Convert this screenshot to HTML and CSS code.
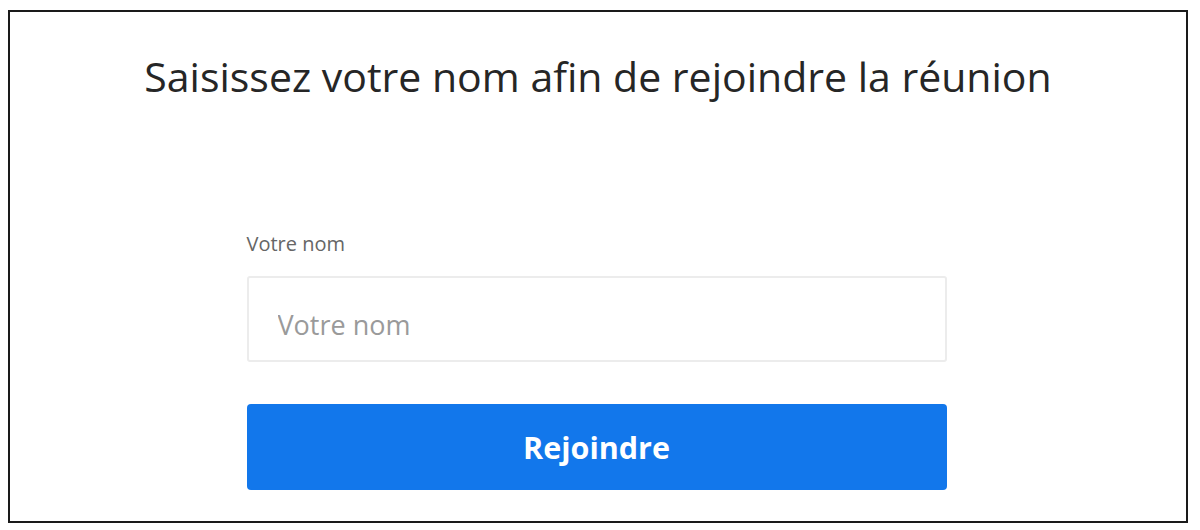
FILE: index.html
```html
<!DOCTYPE html>
<html lang="fr">
<head>
<meta charset="utf-8">
<link rel="stylesheet" href="styles.css">
</head>
<body>
<div class="frame">
  <h1 class="title">Saisissez votre nom afin de rejoindre la réunion</h1>
  <form class="form">
    <label class="label" for="nom">Votre nom</label>
    <input class="input" id="nom" type="text" placeholder="Votre nom">
    <button class="btn" type="button">Rejoindre</button>
  </form>
</div>
</body>
</html>
```
FILE: styles.css
```css
html, body {
  margin: 0;
  padding: 0;
  background: #fff;
}
body {
  font-family: "Open Sans", "Noto Sans", sans-serif;
}
.frame {
  box-sizing: border-box;
  margin: 10px 0 0 8px;
  width: 1180px;
  height: 513px;
  border: 2px solid #1a1a1a;
  display: flex;
  flex-direction: column;
  align-items: center;
}
.title {
  margin: 37px 0 0 0;
  font-weight: 400;
  font-size: 41px;
  line-height: 54px;
  color: #262626;
}
.form {
  margin: 129px 3px 0 0;
  width: 700px;
  display: flex;
  flex-direction: column;
}
.label {
  font-size: 20px;
  line-height: 24px;
  color: #666;
  margin-bottom: 20px;
}
.input {
  box-sizing: border-box;
  height: 86px;
  border: 2px solid #ececec;
  border-radius: 3px;
  padding: 10px 29px 0 29px;
  font-family: inherit;
  font-size: 27px;
  color: #333;
  outline: none;
}
.input::placeholder {
  color: #9a9a9a;
}
.btn {
  margin-top: 42px;
  height: 86px;
  border: none;
  border-radius: 4px;
  background: #1277eb;
  color: #fff;
  font-family: inherit;
  font-weight: 700;
  font-size: 30.5px;
  cursor: pointer;
}
```
